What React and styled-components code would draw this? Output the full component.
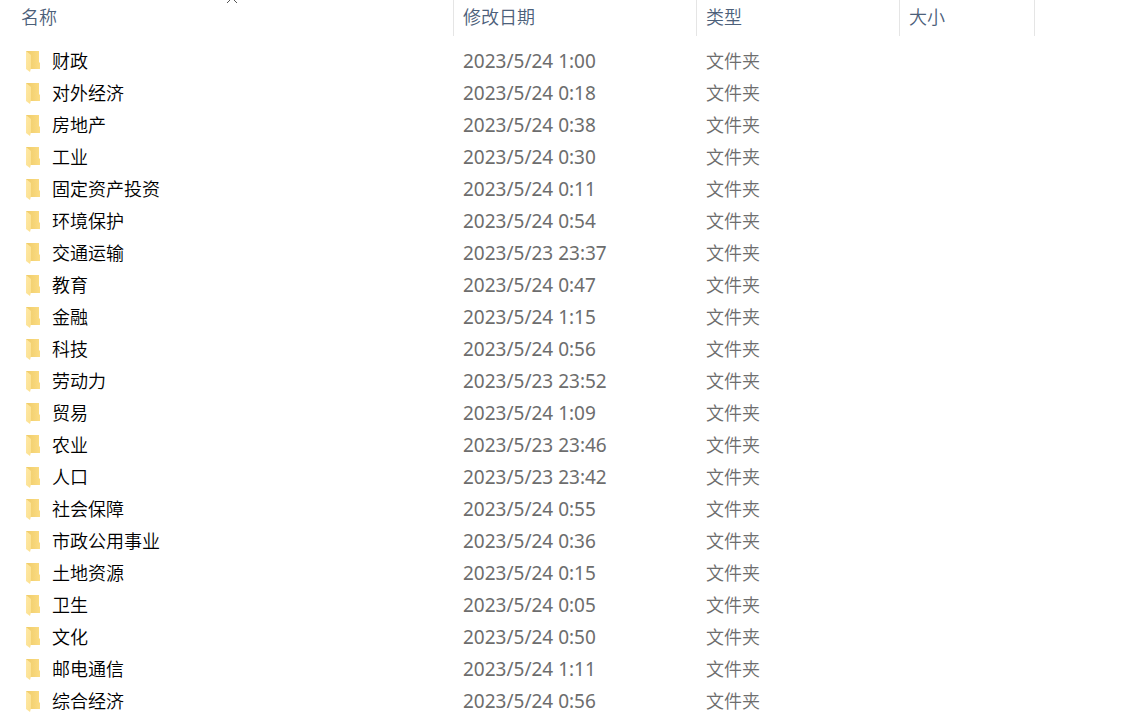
import { useState } from "react";
import styled, { createGlobalStyle } from "styled-components";

const GlobalStyle = createGlobalStyle`
  body {
    margin: 0;
    background: #fff;
    font-family: "Noto Sans", "Noto Sans CJK SC", sans-serif;
    font-size: 18px;
  }
`;

const Wrapper = styled.main`
  padding-left: 11px;
  overflow: hidden;
`;

const FileTable = styled.table`
  width: 100%;
  table-layout: fixed;
  border-collapse: separate;
  border-spacing: 0;
`;

const Column = styled.col`
  width: ${(props) => props.$width};
`;

const HeadCell = styled.th`
  position: relative;
  height: 36px;
  padding: 0;
  box-sizing: border-box;
  border-right: ${(props) => (props.$last ? "none" : "1px solid #e5e5e5")};
`;

const HeadButton = styled.button`
  display: block;
  width: 100%;
  height: 36px;
  padding: 0 0 2px ${(props) => (props.$first ? "10px" : "9px")};
  border: 0;
  background: none;
  color: #4c607a;
  font: inherit;
  font-weight: 350;
  line-height: 34px;
  text-align: left;
`;

const SortArrow = styled.svg`
  position: absolute;
  top: -3px;
  left: 50%;
  margin-left: -6px;
  transform: ${(props) => (props.$down ? "scaleY(-1)" : "none")};
`;

const Spacer = styled.tbody`
  td {
    height: 9px;
    padding: 0;
  }
`;

const Cell = styled.td`
  height: 32px;
  padding: 0 0 0 9px;
  color: #6d6d6d;
  font-weight: 350;
  line-height: 32px;
  white-space: nowrap;
`;

const DateCell = styled(Cell)`
  font-size: 19px;
  font-weight: 400;
`;

const NameCell = styled(Cell)`
  padding-left: 15px;
  color: #000;
`;

const FileName = styled.div`
  display: flex;
  align-items: center;
  gap: 10px;
`;

const columns = [
  { key: "name", label: "名称", width: "443px" },
  { key: "date", label: "修改日期", width: "243px" },
  { key: "type", label: "类型", width: "203px" },
  { key: "size", label: "大小", width: "135px" },
];

const folders = [
  { name: "财政", date: "2023/5/24 1:00" },
  { name: "对外经济", date: "2023/5/24 0:18" },
  { name: "房地产", date: "2023/5/24 0:38" },
  { name: "工业", date: "2023/5/24 0:30" },
  { name: "固定资产投资", date: "2023/5/24 0:11" },
  { name: "环境保护", date: "2023/5/24 0:54" },
  { name: "交通运输", date: "2023/5/23 23:37" },
  { name: "教育", date: "2023/5/24 0:47" },
  { name: "金融", date: "2023/5/24 1:15" },
  { name: "科技", date: "2023/5/24 0:56" },
  { name: "劳动力", date: "2023/5/23 23:52" },
  { name: "贸易", date: "2023/5/24 1:09" },
  { name: "农业", date: "2023/5/23 23:46" },
  { name: "人口", date: "2023/5/23 23:42" },
  { name: "社会保障", date: "2023/5/24 0:55" },
  { name: "市政公用事业", date: "2023/5/24 0:36" },
  { name: "土地资源", date: "2023/5/24 0:15" },
  { name: "卫生", date: "2023/5/24 0:05" },
  { name: "文化", date: "2023/5/24 0:50" },
  { name: "邮电通信", date: "2023/5/24 1:11" },
  { name: "综合经济", date: "2023/5/24 0:56" },
];

function FolderIcon() {
  return (
    <svg width="16" height="22" viewBox="0 0 16 22" aria-hidden="true">
      <defs>
        <linearGradient id="back" x1="0" y1="0" x2="1" y2="0">
          <stop offset="0" stopColor="#efcb68" />
          <stop offset="1" stopColor="#fbdc83" />
        </linearGradient>
        <linearGradient id="flap" x1="0" y1="0" x2="1" y2="1">
          <stop offset="0" stopColor="#ffe8a4" />
          <stop offset="1" stopColor="#fbe08f" />
        </linearGradient>
      </defs>
      <path d="M0 1H13V12L14 13V19H4L0 17Z" fill="url(#back)" />
      <path d="M0 1L5 5V18L4 22L0 19Z" fill="url(#flap)" />
    </svg>
  );
}

export default function App() {
  const [down, setDown] = useState(false);
  const rows = down ? [...folders].reverse() : folders;

  return (
    <Wrapper>
      <GlobalStyle />
      <FileTable>
        <colgroup>
          {columns.map((col) => (
            <Column key={col.key} $width={col.width} />
          ))}
          <Column $width="auto" />
        </colgroup>
        <thead>
          <tr>
            {columns.map((col, i) => (
              <HeadCell key={col.key} scope="col">
                <HeadButton $first={i === 0} onClick={() => i === 0 && setDown(!down)}>
                  {col.label}
                </HeadButton>
                {i === 0 && (
                  <SortArrow $down={down} width="12" height="7" viewBox="0 0 12 7">
                    <path d="M1 6L6 1L11 6" fill="none" stroke="#555" />
                  </SortArrow>
                )}
              </HeadCell>
            ))}
            <HeadCell as="td" $last />
          </tr>
        </thead>
        <Spacer aria-hidden="true">
          <tr>
            <td colSpan={5} />
          </tr>
        </Spacer>
        <tbody>
          {rows.map((row) => (
            <tr key={row.name}>
              <NameCell>
                <FileName>
                  <FolderIcon />
                  {row.name}
                </FileName>
              </NameCell>
              <DateCell>{row.date}</DateCell>
              <Cell>文件夹</Cell>
              <Cell />
              <Cell />
            </tr>
          ))}
        </tbody>
      </FileTable>
    </Wrapper>
  );
}
